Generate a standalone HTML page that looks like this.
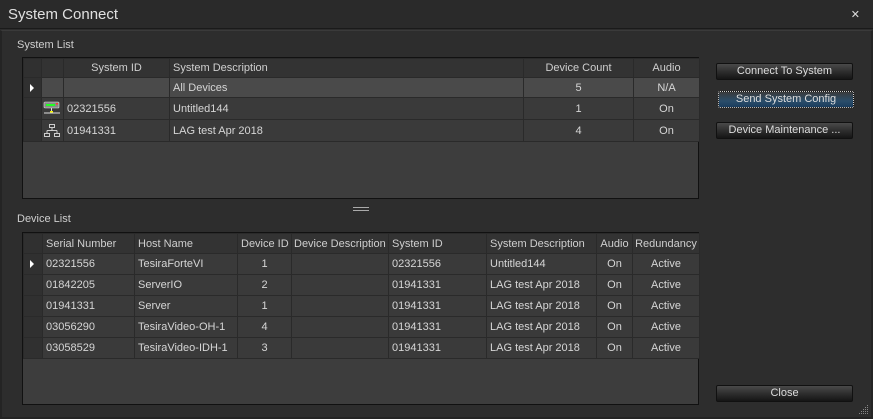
<!DOCTYPE html>
<html><head><meta charset="utf-8">
<style>
*{margin:0;padding:0;box-sizing:border-box}
html,body{width:873px;height:419px;overflow:hidden;background:#2d2d2d;font-family:"Liberation Sans",sans-serif;font-size:11px;color:#d8d8d8}
.abs{position:absolute}
#title{left:0;top:0;width:873px;height:29px;background:#2a2a2a;border-bottom:1px solid #1a1a1a}
#title span{position:absolute;left:8px;top:6px;font-size:15px;color:#e0e0e0}
#x{right:13px;top:8px;font-size:11px;color:#ddd}
#frame{left:0;top:30px;width:873px;height:389px;border-left:2px solid #242424;border-right:2px solid #242424;border-bottom:2px solid #242424;border-top:1px solid #3a3a3a}
.lbl{color:#cfcfcf;font-size:11px}
.grid{background:#3d3d3d;border:1px solid #111}
table{border-collapse:collapse;table-layout:fixed;position:absolute;left:0;top:0}
td,th{border:1px solid #2a2a2a;font-weight:normal;white-space:nowrap;overflow:hidden;padding:0 3px;font-size:11px;line-height:12px}
th{background:#333;color:#cfcfcf}
td{background:#3a3a3a;color:#d6d6d6}
#dl td{height:21px}
#dl th{height:20px}
td.rh,th.rh{background:#303030}
td.c,th.c{text-align:center}
tr.sel td{background:#4a4a4a}
tr.sel td.rh{background:#303030}
.arr{display:inline-block;width:0;height:0;border-top:4px solid transparent;border-bottom:4px solid transparent;border-left:4px solid #fff;margin-left:3px;vertical-align:middle}
.btn{width:137px;height:17px;background:linear-gradient(#4a4a4a,#2e2e2e 50%,#151515);border:1px solid #111;color:#ddd;text-align:center;line-height:15px;font-size:11px;border-radius:2px}
.btn.f{background:linear-gradient(#3a3a3a,#2a4d6a 60%,#1a3d5e);outline:1px dotted #ccc;outline-offset:-1px}
</style></head><body>
<div id="title" class="abs"><span>System Connect</span><div id="x" class="abs">✕</div></div>
<div id="frame" class="abs"></div>
<div class="abs lbl" style="left:17px;top:39px">System List</div>
<div class="abs grid" style="left:22px;top:57px;width:677px;height:142px">
<table style="width:676px">
<colgroup><col style="width:18px"><col style="width:22px"><col style="width:106px"><col style="width:354px"><col style="width:110px"><col style="width:66px"></colgroup>
<tr style="height:19px"><th class="rh"></th><th></th><th class="c">System ID</th><th style="text-align:left">System Description</th><th class="c">Device Count</th><th class="c">Audio</th></tr>
<tr class="sel" style="height:20px"><td class="rh"><span class="arr"></span></td><td></td><td></td><td>All Devices</td><td class="c">5</td><td class="c">N/A</td></tr>
<tr style="height:22px"><td class="rh"></td><td style="padding:0"><svg width="20" height="20" viewBox="0 0 20 20" style="display:block"><rect x="2" y="3" width="15" height="6" rx="1" fill="#888" stroke="#ddd" stroke-width="0.6"/><rect x="4" y="5" width="9" height="2" fill="#2f2"/><rect x="14" y="4" width="2" height="1.5" fill="#f33"/><line x1="9.5" y1="9" x2="9.5" y2="13" stroke="#ddd"/><rect x="8" y="12" width="3" height="2" fill="#ee0"/><line x1="2" y1="14" x2="18" y2="14" stroke="#ddd"/></svg></td><td>02321556</td><td>Untitled144</td><td class="c">1</td><td class="c">On</td></tr>
<tr style="height:22px"><td class="rh"></td><td style="padding:0"><svg width="20" height="20" viewBox="0 0 20 20" fill="none" stroke="#ccc" stroke-width="1" style="display:block"><rect x="7.5" y="3.5" width="5" height="3"/><path d="M10 6.5V9.5M5 9.5H15M5 9.5V12.5M15 9.5V12.5"/><rect x="2.5" y="12.5" width="5" height="3"/><rect x="12.5" y="12.5" width="5" height="3"/></svg></td><td>01941331</td><td>LAG test Apr 2018</td><td class="c">4</td><td class="c">On</td></tr>
</table></div>
<div class="abs" style="left:353px;top:207px;width:16px;height:1px;background:#aaa"></div>
<div class="abs" style="left:353px;top:210px;width:16px;height:1px;background:#aaa"></div>
<div class="abs lbl" style="left:17px;top:213px">Device List</div>
<div class="abs grid" style="left:22px;top:232px;width:677px;height:173px">
<table id="dl" style="width:676px">
<colgroup><col style="width:19px"><col style="width:92px"><col style="width:103px"><col style="width:54px"><col style="width:97px"><col style="width:98px"><col style="width:110px"><col style="width:36px"><col style="width:67px"></colgroup>
<tr><th class="rh"></th><th style="text-align:left">Serial Number</th><th style="text-align:left">Host Name</th><th class="c">Device ID</th><th style="text-align:left;padding:0 2px">Device Description</th><th style="text-align:left">System ID</th><th style="text-align:left">System Description</th><th class="c" style="padding:0">Audio</th><th class="c" style="padding:0">Redundancy</th></tr>
<tr><td class="rh"><span class="arr"></span></td><td>02321556</td><td>TesiraForteVI</td><td class="c">1</td><td></td><td>02321556</td><td>Untitled144</td><td class="c">On</td><td class="c">Active</td></tr>
<tr><td class="rh"></td><td>01842205</td><td>ServerIO</td><td class="c">2</td><td></td><td>01941331</td><td>LAG test Apr 2018</td><td class="c">On</td><td class="c">Active</td></tr>
<tr><td class="rh"></td><td>01941331</td><td>Server</td><td class="c">1</td><td></td><td>01941331</td><td>LAG test Apr 2018</td><td class="c">On</td><td class="c">Active</td></tr>
<tr><td class="rh"></td><td>03056290</td><td>TesiraVideo-OH-1</td><td class="c">4</td><td></td><td>01941331</td><td>LAG test Apr 2018</td><td class="c">On</td><td class="c">Active</td></tr>
<tr><td class="rh"></td><td>03058529</td><td>TesiraVideo-IDH-1</td><td class="c">3</td><td></td><td>01941331</td><td>LAG test Apr 2018</td><td class="c">On</td><td class="c">Active</td></tr>
</table></div>
<div class="abs btn" style="left:716px;top:63px">Connect To System</div>
<div class="abs btn f" style="left:718px;top:91px;width:136px">Send System Config</div>
<div class="abs btn" style="left:716px;top:122px">Device Maintenance ...</div>
<div class="abs btn" style="left:716px;top:385px">Close</div>
<svg class="abs" style="left:856px;top:402px" width="14" height="14"><g fill="#888"><rect x="11" y="3" width="1" height="1"/><rect x="9" y="5" width="1" height="1"/><rect x="11" y="5" width="1" height="1"/><rect x="7" y="7" width="1" height="1"/><rect x="9" y="7" width="1" height="1"/><rect x="11" y="7" width="1" height="1"/><rect x="5" y="9" width="1" height="1"/><rect x="7" y="9" width="1" height="1"/><rect x="9" y="9" width="1" height="1"/><rect x="11" y="9" width="1" height="1"/><rect x="3" y="11" width="1" height="1"/><rect x="5" y="11" width="1" height="1"/><rect x="7" y="11" width="1" height="1"/><rect x="9" y="11" width="1" height="1"/><rect x="11" y="11" width="1" height="1"/></g></svg>
</body></html>
